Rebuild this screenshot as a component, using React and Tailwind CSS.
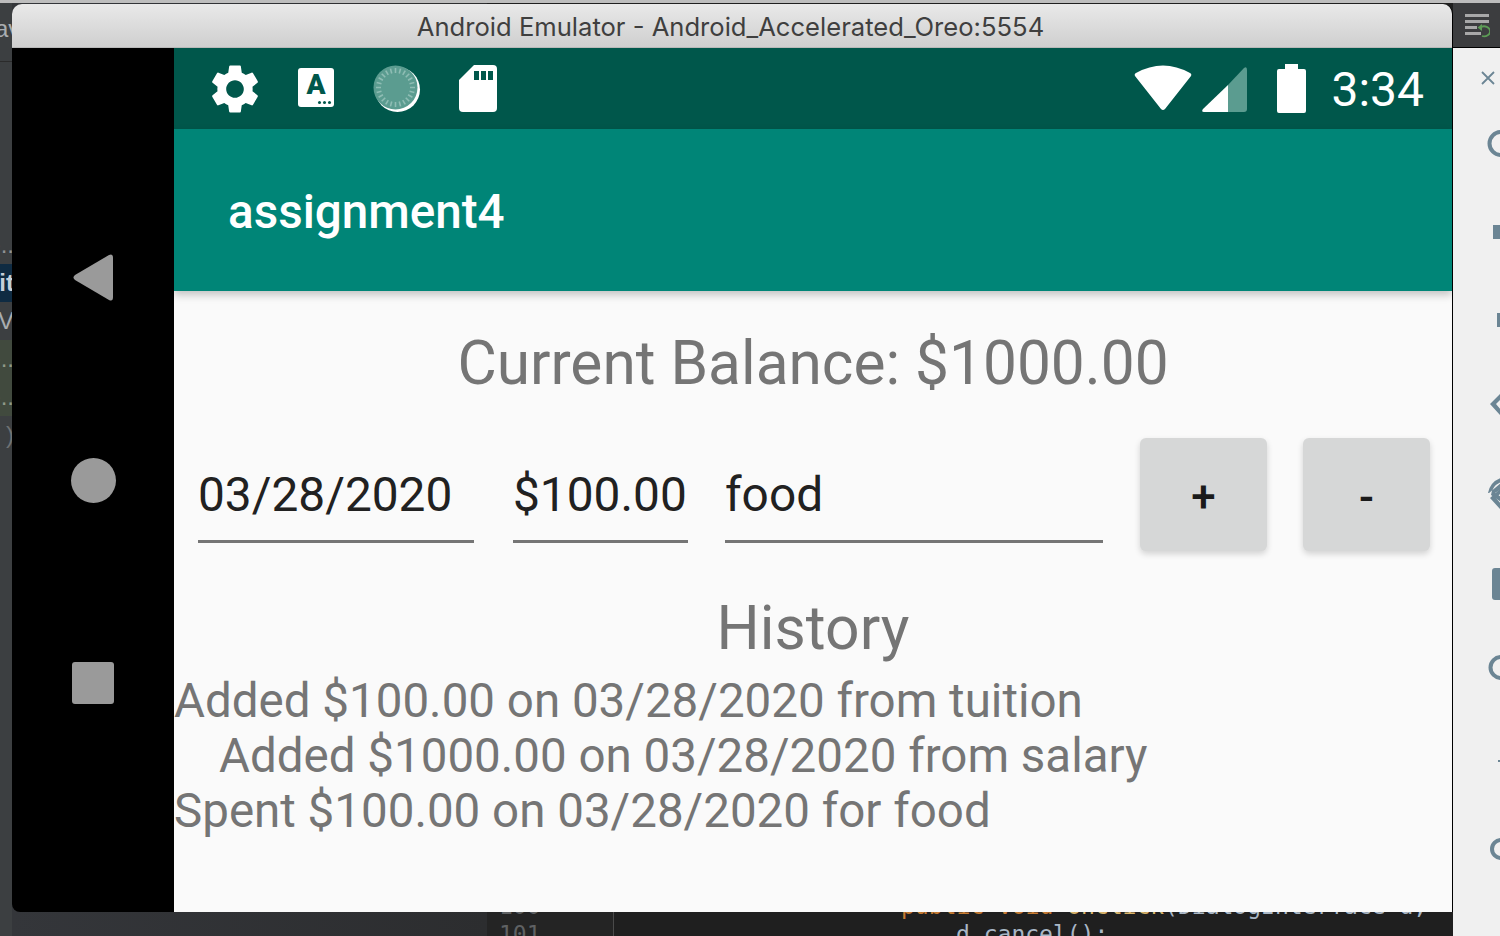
import React from "react";

const sideRows = [
  { text: "e..", cls: "text-[#8f9294]" },
  { text: "it", cls: "text-[#c5d0da] bg-[#0f2b42] font-bold" },
  { text: "V", cls: "text-[#a9adb0]" },
  { text: "e..", cls: "text-[#8f9a88] bg-[#414a3e]" },
  { text: "e..", cls: "text-[#8f9a88] bg-[#414a3e]" },
  { text: ")", cls: "text-[#6f7274]" },
];

const historyRows = [
  { text: "Added $100.00 on 03/28/2020 from tuition", cls: "" },
  { text: "Added $1000.00 on 03/28/2020 from salary", cls: "pl-[45px]" },
  { text: "Spent $100.00 on 03/28/2020 for food", cls: "" },
];

function GearIcon() {
  return (
    <svg width="48" height="50" viewBox="2.6 1.8 18.8 20.4" fill="#fff">
      <path d="M19.14 12.94c.04-.3.06-.61.06-.94 0-.32-.02-.64-.07-.94l2.03-1.58c.18-.14.23-.41.12-.61l-1.92-3.32c-.12-.22-.37-.29-.59-.22l-2.39.96c-.5-.38-1.03-.7-1.62-.94l-.36-2.54c-.04-.24-.24-.41-.48-.41h-3.84c-.24 0-.43.17-.47.41l-.36 2.54c-.59.24-1.13.57-1.62.94l-2.39-.96c-.22-.08-.47 0-.59.22L2.74 8.87c-.12.21-.08.47.12.61l2.03 1.58c-.05.3-.09.63-.09.94s.02.64.07.94l-2.03 1.58c-.18.14-.23.41-.12.61l1.92 3.32c.12.22.37.29.59.22l2.39-.96c.5.38 1.03.7 1.62.94l.36 2.54c.05.24.24.41.48.41h3.84c.24 0 .44-.17.47-.41l.36-2.54c.59-.24 1.13-.56 1.62-.94l2.39.96c.22.08.47 0 .59-.22l1.92-3.32c.12-.22.07-.47-.12-.61l-2.01-1.58zM12 15.6c-1.98 0-3.6-1.62-3.6-3.6s1.62-3.6 3.6-3.6 3.6 1.62 3.6 3.6-1.62 3.6-3.6 3.6z" />
    </svg>
  );
}

function KeyboardIcon() {
  return (
    <div className="relative -mt-[2px] flex h-[39px] w-[36px] items-start justify-center rounded-[3px] bg-white pt-[3px]">
      <span className="font-['Roboto',sans-serif] text-[28px] font-black leading-[28px] text-[#00574b]">A</span>
      <span className="absolute bottom-[3px] right-[3px] flex gap-[2px]">
        <i className="h-[3px] w-[3px] rounded-full bg-[#00574b]" />
        <i className="h-[3px] w-[3px] rounded-full bg-[#00574b]" />
        <i className="h-[3px] w-[3px] rounded-full bg-[#00574b]" />
      </span>
    </div>
  );
}

function SyncIcon() {
  const ticks = Array.from({ length: 24 }, (_, i) => i * 15);
  return (
    <svg width="48" height="48" viewBox="0 0 48 48">
      <circle cx="24.5" cy="24.5" r="22.5" fill="#fff" />
      <circle cx="22.5" cy="22.5" r="22" fill="#5b9c90" />
      {ticks.map((a) => (
        <line key={a} x1="22.5" y1="3" x2="22.5" y2="8" stroke="#8fbdb4" strokeWidth="1.6" transform={`rotate(${a} 22.5 22.5)`} />
      ))}
    </svg>
  );
}

function SdCardIcon() {
  return (
    <svg width="38" height="47" viewBox="0 0 38 47">
      <path d="M15 0H34a4 4 0 0 1 4 4V43a4 4 0 0 1-4 4H4a4 4 0 0 1-4-4V15Z" fill="#fff" />
      <rect x="15" y="6" width="5" height="9" fill="#00574b" />
      <rect x="22" y="6" width="5" height="9" fill="#00574b" />
      <rect x="29" y="6" width="5" height="9" fill="#00574b" />
    </svg>
  );
}

function WifiIcon() {
  return (
    <svg width="58" height="46" viewBox="0 0 58 46">
      <path d="M1 11Q0 9 2 8Q29 -7 56 8Q58 9 57 11L31 44Q29 46 27 44Z" fill="#fff" />
    </svg>
  );
}

function SignalIcon() {
  return (
    <svg width="45" height="45" viewBox="0 0 45 45">
      <path d="M26 18L42 1Q45 -1 45 3V42Q45 45 42 45H26Z" fill="#5b9c90" />
      <path d="M26 18V45H2Q-1 45 1 42Z" fill="#fff" />
    </svg>
  );
}

function BatteryIcon() {
  return (
    <svg width="29" height="49" viewBox="0 0 29 49">
      <path d="M8 0H21V5H27a2 2 0 0 1 2 2V47a2 2 0 0 1-2 2H2a2 2 0 0 1-2-2V7a2 2 0 0 1 2-2H8Z" fill="#fff" />
    </svg>
  );
}

function NavButtons() {
  return (
    <div className="flex w-[162px] shrink-0 flex-col items-center bg-black pt-[206px]">
      <svg width="42" height="47" viewBox="0 0 42 47" className="ml-[1px]">
        <path d="M2 21L36 1Q40 -1 40 4V43Q40 48 36 46L2 26Q-1 23.5 2 21Z" fill="#9a9a9a" />
      </svg>
      <div className="mt-[157px] h-[45px] w-[45px] rounded-full bg-[#9a9a9a]" />
      <div className="mt-[159px] h-[42px] w-[42px] rounded-[3px] bg-[#9a9a9a]" />
    </div>
  );
}

function Field({ value, width }) {
  return (
    <div className={`${width} flex h-[105px] shrink-0 items-center border-b-[3px] border-[#757575] pt-[11px] font-['Roboto',sans-serif] text-[47.8px] leading-[56px] text-[#212121]`}>
      {value}
    </div>
  );
}

function ActionButton({ label, cls }) {
  return (
    <button className={`${cls} flex h-[113px] w-[127px] shrink-0 items-center justify-center rounded-[6px] bg-[#d6d7d7] pt-[5px] font-['Roboto',sans-serif] text-[44px] font-medium text-[#1a1a1a] shadow-[0_3px_6px_rgba(0,0,0,0.16)]`}>
      {label}
    </button>
  );
}

function EmulatorWindow() {
  return (
    <div className="absolute left-[12px] top-[4px] flex h-[908px] w-[1441px] flex-col overflow-hidden rounded-t-[10px] rounded-bl-[8px] border-r border-black">
      <div className="flex h-[44px] shrink-0 items-center justify-center border-b border-[#b9b9b9] bg-gradient-to-b from-[#e9e9e9] to-[#cfcfcf] pr-[3px] pt-[4px] font-['Inter',sans-serif] text-[25.6px] text-[#3f3f3f]">
        Android Emulator - Android_Accelerated_Oreo:5554
      </div>

      <div className="flex min-h-0 flex-1">
        <NavButtons />

        <div className="flex min-w-0 flex-1 flex-col bg-[#fafafa]">
          {/* status bar */}
          <div className="flex h-[81px] shrink-0 items-center bg-[#00574b] pl-[37px] pr-[28px]">
            <GearIcon />
            <div className="ml-[39px]"><KeyboardIcon /></div>
            <div className="ml-[39px]"><SyncIcon /></div>
            <div className="ml-[38px]"><SdCardIcon /></div>
            <div className="ml-auto -mt-[1px]"><WifiIcon /></div>
            <div className="ml-[10px] mt-[1px]"><SignalIcon /></div>
            <div className="ml-[30px]"><BatteryIcon /></div>
            <span className="ml-[25px] pt-[3px] font-['Roboto',sans-serif] text-[48px] leading-none text-white">3:34</span>
          </div>

          {/* app bar */}
          <div className="z-10 flex h-[162px] shrink-0 items-center bg-[#008577] pl-[54px] pt-[6px] font-['Roboto',sans-serif] text-[47.6px] font-medium text-white shadow-[0_4px_8px_rgba(0,0,0,0.22)]">
            assignment4
          </div>

          <div className="mt-[38px] text-center font-['Roboto',sans-serif] text-[60.4px] leading-[70px] text-[#757575]">
            Current Balance: $1000.00
          </div>

          <div className="mt-[39px] flex items-start pl-[24px]">
            <Field value="03/28/2020" width="w-[276px]" />
            <Field value="$100.00" width="ml-[39px] w-[175px]" />
            <Field value="food" width="ml-[37px] w-[378px]" />
            <ActionButton label="+" cls="ml-[37px]" />
            <ActionButton label="-" cls="ml-[36px]" />
          </div>

          <div className="mt-[43px] text-center font-['Roboto',sans-serif] text-[60.6px] leading-[70px] text-[#757575]">
            History
          </div>

          <div className="mt-[10px] font-['Roboto',sans-serif] text-[47.5px] leading-[55px] text-[#757575]">
            {historyRows.map((row) => (
              <div key={row.text} className={row.cls}>{row.text}</div>
            ))}
          </div>
        </div>
      </div>
    </div>
  );
}

function ToolRail() {
  return (
    <div className="flex w-[47px] shrink-0 flex-col bg-[#f0f0f0]">
      <div className="h-[3px] shrink-0 bg-[#bdbdbd]" />
      <div className="flex h-[45px] shrink-0 items-center justify-center border-b border-black bg-[#3c3d3f]">
        <svg width="26" height="26" viewBox="0 0 26 26" className="mt-[2px]">
          <rect x="1" y="1" width="24" height="3" fill="#a8a8a8" />
          <rect x="1" y="7" width="24" height="3" fill="#a8a8a8" />
          <rect x="1" y="13" width="12" height="3" fill="#a8a8a8" />
          <rect x="1" y="19" width="16" height="3" fill="#a8a8a8" />
          <path d="M17 14a6 5 0 1 1 1 9" fill="none" stroke="#5c9c55" strokeWidth="1.8" />
          <path d="M13.5 14.5L18 11V18Z" fill="#5c9c55" />
        </svg>
      </div>
      <svg width="16" height="16" viewBox="0 0 16 16" className="ml-[27px] mt-[22px] shrink-0">
        <path d="M2 2L14 14M14 2L2 14" stroke="#6b8594" strokeWidth="1.8" />
      </svg>
      {/* icons cut off by the window edge */}
      <svg width="47" height="811" viewBox="0 0 47 811" className="mt-[39px] shrink-0" fill="#6b8594">
        <path d="M48 5A13 13 0 0 0 48 32V28A9 9 0 0 1 48 9Z" />
        <rect x="40" y="100" width="8" height="14" />
        <rect x="44" y="188" width="4" height="14" />
        <path d="M37 279L48 268V274L43 279L48 285V291Z" />
        <path d="M35 368A20 20 0 0 1 48 353V357A16 16 0 0 0 38 370L48 377V372L42 368L48 364V358L36 368Z" />
        <path d="M37 373L48 363V368L43 373L48 379V385Z" />
        <rect x="39" y="443" width="10" height="32" rx="3" />
        <path d="M48 530A12 12 0 0 0 48 555V551A8 8 0 0 1 48 534Z" />
        <rect x="45" y="635" width="3" height="2" />
        <path d="M48 713A11 11 0 0 0 48 735V731A7 7 0 0 1 48 717Z" />
      </svg>
    </div>
  );
}

export default function App() {
  return (
    <div className="relative flex h-[936px] w-[1500px] overflow-hidden bg-[#2d2e30]">
      {/* ide file list, only a sliver shows */}
      <div className="flex w-[12px] shrink-0 flex-col overflow-hidden bg-[#3c3f41] font-['Liberation_Sans',sans-serif] text-[24px] leading-[38px]">
        <div className="h-[3px] w-full shrink-0 bg-[#bdbdbd]" />
        <div className="-ml-[5px] mt-[7px] flex h-[38px] shrink-0 whitespace-nowrap text-[#a9adb0]">av</div>
        <div className="mt-[13px] h-px shrink-0 bg-[#2b2b2b]" />
        <div className="mt-[164px] flex shrink-0 flex-col">
          {sideRows.map((row, idx) => (
            <div key={idx} className={`flex h-[38px] justify-end whitespace-nowrap pr-0 ${row.cls}`}>
              <span className="-mr-[2px]">{row.text}</span>
            </div>
          ))}
        </div>
      </div>

      <div className="flex w-[475px] shrink-0 flex-col bg-gradient-to-r from-[#34363a] to-[#2c2d2f]">
        <div className="h-[3px] w-full shrink-0 bg-[#bdbdbd]" />
      </div>

      {/* code editor below the emulator */}
      <div className="flex min-w-0 flex-1 flex-col justify-between bg-[#1f1f1f] font-['DejaVu_Sans_Mono',monospace] text-[23px] leading-[28px]">
        <div className="h-[3px] w-full shrink-0 bg-[#bdbdbd]" />
        <div className="mb-[-12px] flex whitespace-nowrap">
          <div className="flex w-[126px] shrink-0 flex-col bg-[#242424] pl-[12px] text-[#5f6163]">
            <div className="flex">
              <span>100</span>
              <span className="ml-[30px] mt-[8px] h-[6px] w-px bg-[#a8483c]" />
              <span className="ml-[32px] mt-[6px] h-[7px] w-[14px] border border-[#6a6a6a]" />
            </div>
            <span>101</span>
          </div>
          <div className="min-w-0 border-l border-[#4a4a4a] pl-[287px]">
            <div>
              <span className="text-[#c57b32]">public void </span>
              <span className="text-[#d8b36a]">onClick</span>
              <span className="text-[#a9b7c6]">(DialogInterface d, </span>
            </div>
            <div className="pl-[55px] text-[#a9b7c6]">d.cancel();</div>
          </div>
        </div>
      </div>

      <ToolRail />
      <EmulatorWindow />
    </div>
  );
}
